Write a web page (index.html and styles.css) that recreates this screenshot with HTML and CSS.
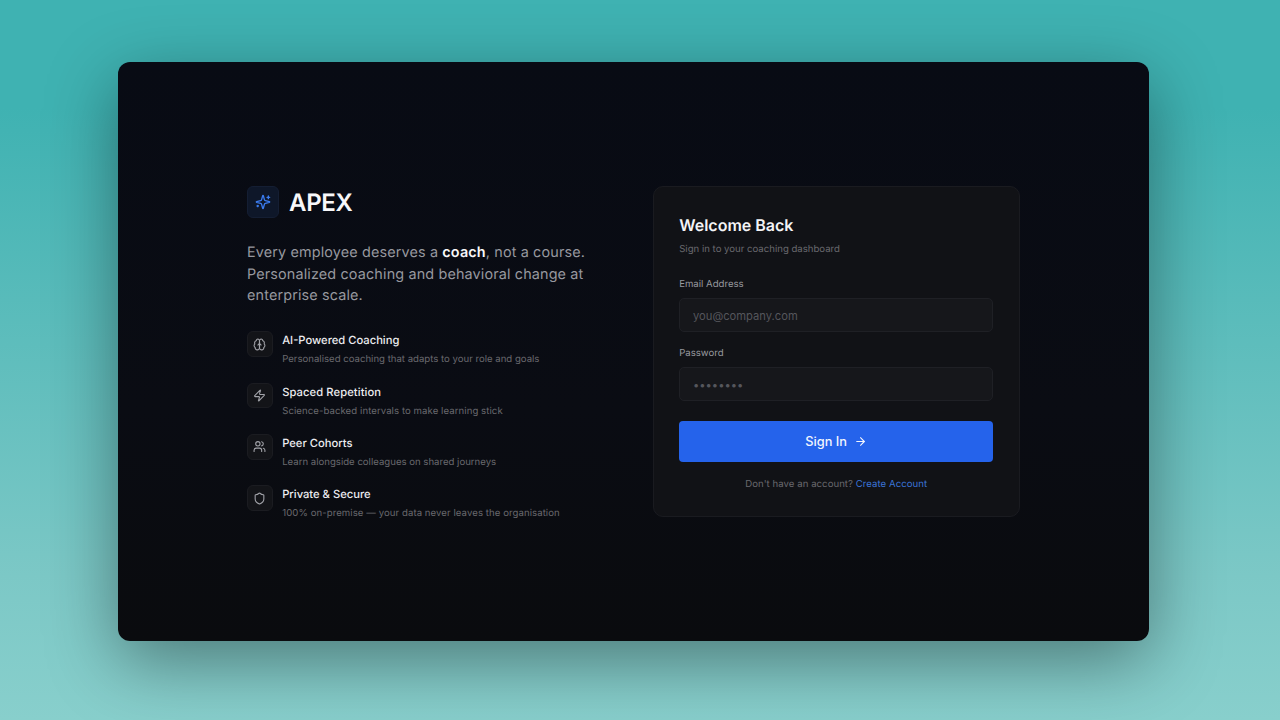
FILE: index.html
```html
<!DOCTYPE html>
<html lang="en">
<head>
<meta charset="utf-8">
<title>APEX</title>
<link rel="stylesheet" href="styles.css">
</head>
<body>
<main class="window">
  <section class="intro">
    <div class="brand">
      <span class="brand-tile">
        <svg class="brand-icon" viewBox="0 0 24 24"><path d="M9.937 15.5A2 2 0 0 0 8.5 14.063l-6.135-1.582a.5.5 0 0 1 0-.962L8.5 9.936A2 2 0 0 0 9.937 8.5l1.582-6.135a.5.5 0 0 1 .963 0L14.063 8.5A2 2 0 0 0 15.5 9.937l6.135 1.581a.5.5 0 0 1 0 .964L15.5 14.063a2 2 0 0 0-1.437 1.437l-1.582 6.135a.5.5 0 0 1-.963 0z"/><path d="M20 3v4"/><path d="M22 5h-4"/><path d="M4 17v2"/><path d="M5 18H3"/></svg>
      </span>
      <h1 class="brand-name">APEX</h1>
    </div>
    <p class="tagline">Every employee deserves a <strong>coach</strong>, not a course. Personalized coaching and behavioral change at enterprise scale.</p>
    <ul class="features">
      <li class="feature">
        <span class="feature-tile"><svg class="feature-icon" viewBox="0 0 24 24"><path d="M12 5a3 3 0 1 0-5.997.125 4 4 0 0 0-2.526 5.770 4 4 0 0 0 .556 6.588A4 4 0 1 0 12 18Z"/><path d="M12 5a3 3 0 1 1 5.997.125 4 4 0 0 1 2.526 5.770 4 4 0 0 1-.556 6.588A4 4 0 1 1 12 18Z"/><path d="M12 5v13"/><path d="M15 13a4.500 4.500 0 0 1-3-4 4.500 4.500 0 0 1-3 4"/></svg></span>
        <div class="feature-text"><h3 class="feature-title">AI-Powered Coaching</h3><p class="feature-desc">Personalised coaching that adapts to your role and goals</p></div>
      </li>
      <li class="feature">
        <span class="feature-tile"><svg class="feature-icon" viewBox="0 0 24 24"><path d="M4 14a1 1 0 0 1-.78-1.630l9.900-10.200a.5.5 0 0 1 .86.46l-1.920 6.020A1 1 0 0 0 13 10h7a1 1 0 0 1 .78 1.630l-9.900 10.200a.5.5 0 0 1-.86-.46l1.920-6.020A1 1 0 0 0 11 14z"/></svg></span>
        <div class="feature-text"><h3 class="feature-title feature-title-wide">Spaced Repetition</h3><p class="feature-desc feature-desc-wide">Science-backed intervals to make learning stick</p></div>
      </li>
      <li class="feature">
        <span class="feature-tile"><svg class="feature-icon" viewBox="0 0 24 24"><path d="M16 21v-2a4 4 0 0 0-4-4H6a4 4 0 0 0-4 4v2"/><circle cx="9" cy="7" r="4"/><path d="M22 21v-2a4 4 0 0 0-3-3.870"/><path d="M16 3.130a4 4 0 0 1 0 7.750"/></svg></span>
        <div class="feature-text"><h3 class="feature-title">Peer Cohorts</h3><p class="feature-desc">Learn alongside colleagues on shared journeys</p></div>
      </li>
      <li class="feature">
        <span class="feature-tile"><svg class="feature-icon" viewBox="0 0 24 24"><path d="M20 13c0 5-3.500 7.500-7.660 8.950a1 1 0 0 1-.67-.01C7.500 20.500 4 18 4 13V6a1 1 0 0 1 1-1c2 0 4.500-1.200 6.240-2.720a1.170 1.170 0 0 1 1.520 0C14.510 3.810 17 5 19 5a1 1 0 0 1 1 1z"/></svg></span>
        <div class="feature-text"><h3 class="feature-title">Private &amp; Secure</h3><p class="feature-desc feature-desc-wide">100% on-premise — your data never leaves the organisation</p></div>
      </li>
    </ul>
  </section>
  <section class="card">
    <h2 class="card-title">Welcome Back</h2>
    <p class="card-sub">Sign in to your coaching dashboard</p>
    <form class="form">
      <label class="field"><span class="field-label">Email Address</span><input class="input" type="email" placeholder="you@company.com"></label>
      <label class="field"><span class="field-label">Password</span><input class="input" type="password" placeholder="••••••••"></label>
      <button class="submit" type="button">Sign In
        <svg class="submit-icon" viewBox="0 0 24 24"><path d="M5 12h14"/><path d="m12 5 7 7-7 7"/></svg>
      </button>
    </form>
    <p class="card-foot">Don't have an account? <a class="link" href="#">Create Account</a></p>
  </section>
</main>
</body>
</html>
```
FILE: styles.css
```css
* { box-sizing: border-box; }
html, body { height: 100%; }
body {
  margin: 0;
  padding: 62px 131px 79px 118px;
  overflow: hidden;
  background: linear-gradient(180deg, #3fb2b2 0%, #3fb2b2 15%, #7cc8c6 80%, #88cfcc 100%);
  font-family: Inter, "Liberation Sans", sans-serif;
  text-rendering: geometricPrecision;
}
.window {
  height: 579px;
  display: flex;
  align-items: flex-start;
  padding: 124px 0 0 129px;
  border-radius: 12px;
  background: linear-gradient(180deg, #080b14 0%, #0a0c13 60%, #0a0b0e 100%);
  box-shadow: 0 20px 70px rgba(0, 0, 0, 0.4);
}
.intro { width: 405.6px; flex: none; }
.brand { display: flex; align-items: center; gap: 10px; height: 32px; }
.brand-tile {
  width: 32px; height: 32px;
  display: flex; align-items: center; justify-content: center;
  border-radius: 6px;
  background: #0e1729;
  border: 1px solid #141e33;
}
.brand-icon { width: 16px; height: 16px; fill: none; stroke: #3b7cf0; stroke-width: 2; stroke-linecap: round; stroke-linejoin: round; }
.brand-name { margin: 1px 0 0; font-size: 24px; line-height: 32px; font-weight: 600; letter-spacing: -0.3px; color: #f8f8fa; }
.tagline {
  margin: 24px 0 0;
  width: 352px;
  font-size: 14.4px;
  line-height: 21.6px;
  letter-spacing: 0.14px;
  color: #97989f;
}
.tagline strong { font-weight: 600; color: #f8f8fa; }
.features { list-style: none; margin: 24.5px 0 0; padding: 0; display: flex; flex-direction: column; gap: 15.4px; }
.feature { display: flex; gap: 9.6px; height: 36px; }
.feature-tile {
  width: 25.6px; height: 25.6px;
  flex: none;
  display: flex; align-items: center; justify-content: center;
  border-radius: 6px;
  background: #131418;
  border: 1px solid #1b1c21;
}
.feature-icon { width: 13px; height: 13px; fill: none; stroke: #a2a3a9; stroke-width: 2; stroke-linecap: round; stroke-linejoin: round; }
.feature-text { padding-top: 1px; }
.feature-title { margin: 0; font-size: 11.2px; line-height: 16px; font-weight: 500; color: #ececf0; }
.feature-title-wide { letter-spacing: 0.09px; }
.feature-desc { margin: 5px 0 0; font-size: 9.6px; line-height: 14px; color: #69696e; }
.feature-desc-wide { letter-spacing: 0.07px; }
.card {
  width: 367.2px;
  flex: none;
  height: 331px;
  padding: 25.6px;
  border-radius: 10px;
  background: #111216;
  border: 1px solid #1a1b20;
}
.card-title { margin: 0; font-size: 16px; line-height: 24px; font-weight: 600; color: #f4f4f6; }
.card-sub { margin: 6.5px 0 0; font-size: 9.6px; line-height: 14px; color: #69696e; }
.form { display: flex; flex-direction: column; margin-top: 20px; }
.field { display: block; margin-bottom: 13.6px; }
.field-label { display: block; margin-bottom: 5px; font-size: 9.6px; line-height: 16px; font-weight: 400; color: #97989e; }
.input {
  display: block;
  width: 100%;
  height: 34.4px;
  padding: 1px 12.8px 0;
  border-radius: 5px;
  border: 1px solid #1f2025;
  background: #16171b;
  font: 400 11.2px Inter, "Liberation Sans", sans-serif;
  color: #f0f0f3;
  outline: none;
}
.input::placeholder { color: #55565c; opacity: 1; }
.submit {
  display: flex; align-items: center; justify-content: center; gap: 7px;
  height: 41.2px;
  margin-top: 6px;
  border: 0;
  border-radius: 4px;
  background: #2563eb;
  color: #f2f5fd;
  font: 500 12.8px Inter, "Liberation Sans", sans-serif;
}
.submit-icon { width: 13px; height: 13px; fill: none; stroke: currentColor; stroke-width: 2; stroke-linecap: round; stroke-linejoin: round; }
.card-foot { margin: 16px 0 0; text-align: center; font-size: 9.6px; line-height: 14px; letter-spacing: 0.05px; color: #69696e; }
.link { color: #3b74d6; text-decoration: none; }
```
